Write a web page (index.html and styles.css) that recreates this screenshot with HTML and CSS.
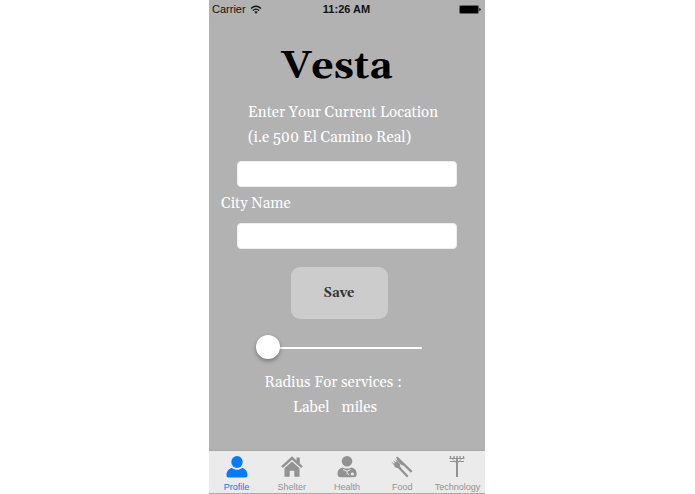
FILE: index.html
```html
<!DOCTYPE html>
<html lang="en">
<head>
<meta charset="utf-8">
<meta name="viewport" content="width=device-width, initial-scale=1">
<title>Vesta</title>
<link rel="stylesheet" href="styles.css">
</head>
<body>
<div class="phone">
  <header class="status">
    <div class="carrier">Carrier
      <svg class="wifi" viewBox="0 0 12 9" aria-hidden="true"><path d="M1 3.4Q6-.9 11 3.4M2.8 5.4Q6 2.7 9.2 5.4" fill="none" stroke="#111" stroke-width="1.3"/><path d="M4.2 6.8Q6 5.5 7.8 6.8L6 8.8z" fill="#111"/></svg>
    </div>
    <time class="clock">11:26 AM</time>
    <svg class="battery" viewBox="0 0 22 9" aria-hidden="true"><rect x=".4" y=".4" width="19.2" height="8.2" rx="1.3" fill="none" stroke="#333" stroke-width=".7"/><rect x="1" y="1" width="18" height="7" rx=".8"/><path d="M20.3 3q1.4.3 1.4 1.5t-1.4 1.5z"/></svg>
  </header>
  <main class="profile">
    <h1 class="title">Vesta</h1>
    <label class="address" for="address">Enter Your Current Location<br>(i.e 500 El Camino Real)</label>
    <input class="field" id="address" type="text">
    <label class="city" for="city">City Name</label>
    <input class="field" id="city" type="text">
    <button class="save" type="button">Save</button>
    <input class="slider" id="radius" type="range" min="0" max="100" value="0">
    <label class="radius" for="radius">Radius For services :</label>
    <div class="distance"><span>Label</span><span>miles</span></div>
  </main>
  <nav class="tabs">
    <a class="tab active" href="#profile">
      <svg class="icon" viewBox="0 0 24 24" aria-hidden="true"><ellipse cx="12" cy="7" rx="5.7" ry="6"/><path d="M1.5 20.5c0-4 2-6.8 5.4-7.5 3 2.4 7.2 2.4 10.2 0 3.4.7 5.4 3.5 5.4 7.5 0 1.2-.8 2-2 2h-17c-1.2 0-2-.8-2-2z"/></svg>
      <span>Profile</span>
    </a>
    <a class="tab" href="#shelter">
      <svg class="icon" viewBox="0 0 24 24" aria-hidden="true"><path d="M12 1.2 16.5 5.4V2.5h3.3v6l3 2.8-1.6 1.8L12 4.8l-9.2 8.3-1.6-1.8z"/><path d="m12 6.5 7.5 6.8v8.5h-5.2v-6H9.7v6H4.5v-8.5z"/></svg>
      <span>Shelter</span>
    </a>
    <a class="tab" href="#health">
      <svg class="icon" viewBox="0 0 24 24" aria-hidden="true"><circle cx="12" cy="6.3" r="5.3"/><path d="M2.5 18.7c0-3.6 1.8-5.8 5.2-6.3 2.8 1.6 5.8 1.6 8.6 0 3.6.5 5.4 2.9 5.4 6.3 0 2.4-1 3.5-3.2 3.5H5.7c-2 0-3.2-1.1-3.2-3.5z"/><path d="m8 14.6 4 1.6 3.5-1.6M12 16.2v2.3l2 1.2" fill="none" stroke="#ebebeb" stroke-width="1"/><circle cx="17.4" cy="19" r="1.6" fill="#ebebeb"/></svg>
      <span>Health</span>
    </a>
    <a class="tab" href="#food">
      <svg class="icon" viewBox="0 0 24 24" aria-hidden="true"><path d="M6.2 2.2c.8-.6 1.6-.4 2.3.2l6.4 6.4-1.7 1.7-1.7-.4c-2.4-2.3-4.8-5-5.3-7.9zM13.2 10.3l1.7-1.5 7.6 7.2-1.7 1.8z"/><path d="m9.5 13 7.6 8" fill="none" stroke="currentColor" stroke-width="2.3" stroke-linecap="round"/><path d="m2 7.3 3.2 3.2M3.7 6l3 3M5.4 4.7l3 3" fill="none" stroke="currentColor" stroke-width="1"/><path d="m3.6 8.9 3.4-3 2.6 2.7c.6.9.7 1.8.5 2.8l.8 1.2-1.6 1.4-1.2-.9c-1.3.1-2.5-.4-3.3-1.4z"/></svg>
      <span>Food</span>
    </a>
    <a class="tab" href="#technology">
      <svg class="icon" viewBox="0 0 24 24" aria-hidden="true"><path d="M12 3v19" fill="none" stroke="currentColor" stroke-width="2"/><path d="M4.5 3.5h15M5 6.5h14" fill="none" stroke="currentColor" stroke-width="1.2"/><path d="M5.5 1v2M9 1v2M12 1v2M15 1v2M18.5 1v2" fill="none" stroke="currentColor" stroke-width="1.4"/><path d="m7 3.5 5 5 5-5" fill="none" stroke="currentColor" stroke-width=".8"/></svg>
      <span>Technology</span>
    </a>
  </nav>
</div>
</body>
</html>
```
FILE: styles.css
```css
* { box-sizing: border-box; }

body {
  margin: 0;
  padding-right: 1px;
  background: #fff;
  font-family: Georgia, Gelasio, "Liberation Serif", serif;
}

.phone {
  display: flex;
  flex-direction: column;
  width: 100%;
  max-width: 276px;
  min-height: 100vh;
  margin: 0 auto;
  background: #b2b2b2;
}

.status {
  display: grid;
  grid-template-columns: 1fr auto 1fr;
  align-items: center;
  height: 18px;
  padding: 0 4px 0 3px;
  color: #111;
  font: 11px/18px "Liberation Sans", sans-serif;
}

.carrier { display: flex; align-items: center; gap: 4px; }
.wifi { width: 12px; height: 9px; }
.clock { font-weight: bold; }
.battery { width: 22px; height: 9px; justify-self: end; }

.profile {
  display: flex;
  flex: 1;
  flex-direction: column;
  align-items: center;
  color: #fff;
  font-size: 15px;
  line-height: 25px;
}

.title {
  margin: 22px 20px 6px 0;
  color: #000;
  font-size: 39px;
  line-height: 54px;
}

.address { margin-right: 8px; }

.field {
  width: 80%;
  height: 26px;
  margin: 11px 0 4px;
  padding: 0 8px;
  border: 1px solid #eee;
  border-radius: 4px;
  background: #fff;
  font: inherit;
}

.city { align-self: flex-start; padding-left: 12px; }

.city + .field { margin: 7px 0 18px; }

.save {
  width: 97px;
  height: 52px;
  margin-right: 16px;
  border: 0;
  border-radius: 9px;
  background: #ccc;
  color: #333;
  font: bold 13px/20px Georgia, Gelasio, "Liberation Serif", serif;
}

.slider {
  width: 60%;
  height: 26px;
  margin: 16px 16px 9px 0;
  background: transparent;
  appearance: none;
}

.slider::-webkit-slider-runnable-track {
  height: 2px;
  border-radius: 1px;
  background: #fff;
}

.slider::-webkit-slider-thumb {
  width: 24px;
  height: 24px;
  margin-top: -12px;
  border-radius: 50%;
  background: #fff;
  box-shadow: 0 2px 4px rgb(0 0 0 / 35%);
  appearance: none;
}

.radius { margin-right: 28px; }
.distance { display: flex; gap: 12px; margin-right: 24px; }

.tabs {
  display: grid;
  grid-template-columns: repeat(5, 1fr);
  height: 44px;
  border-top: 1px solid #a8a8a8;
  border-bottom: 1px solid #aaa;
  background: #ebebeb;
}

.tab {
  display: flex;
  flex-direction: column;
  align-items: center;
  gap: 2px;
  padding-top: 4px;
  color: #929292;
  font: 9px/13px "Liberation Sans", sans-serif;
  text-decoration: none;
}

.tab.active { color: #0879fb; }
.icon { width: 24px; height: 24px; flex: none; fill: currentColor; }
```
